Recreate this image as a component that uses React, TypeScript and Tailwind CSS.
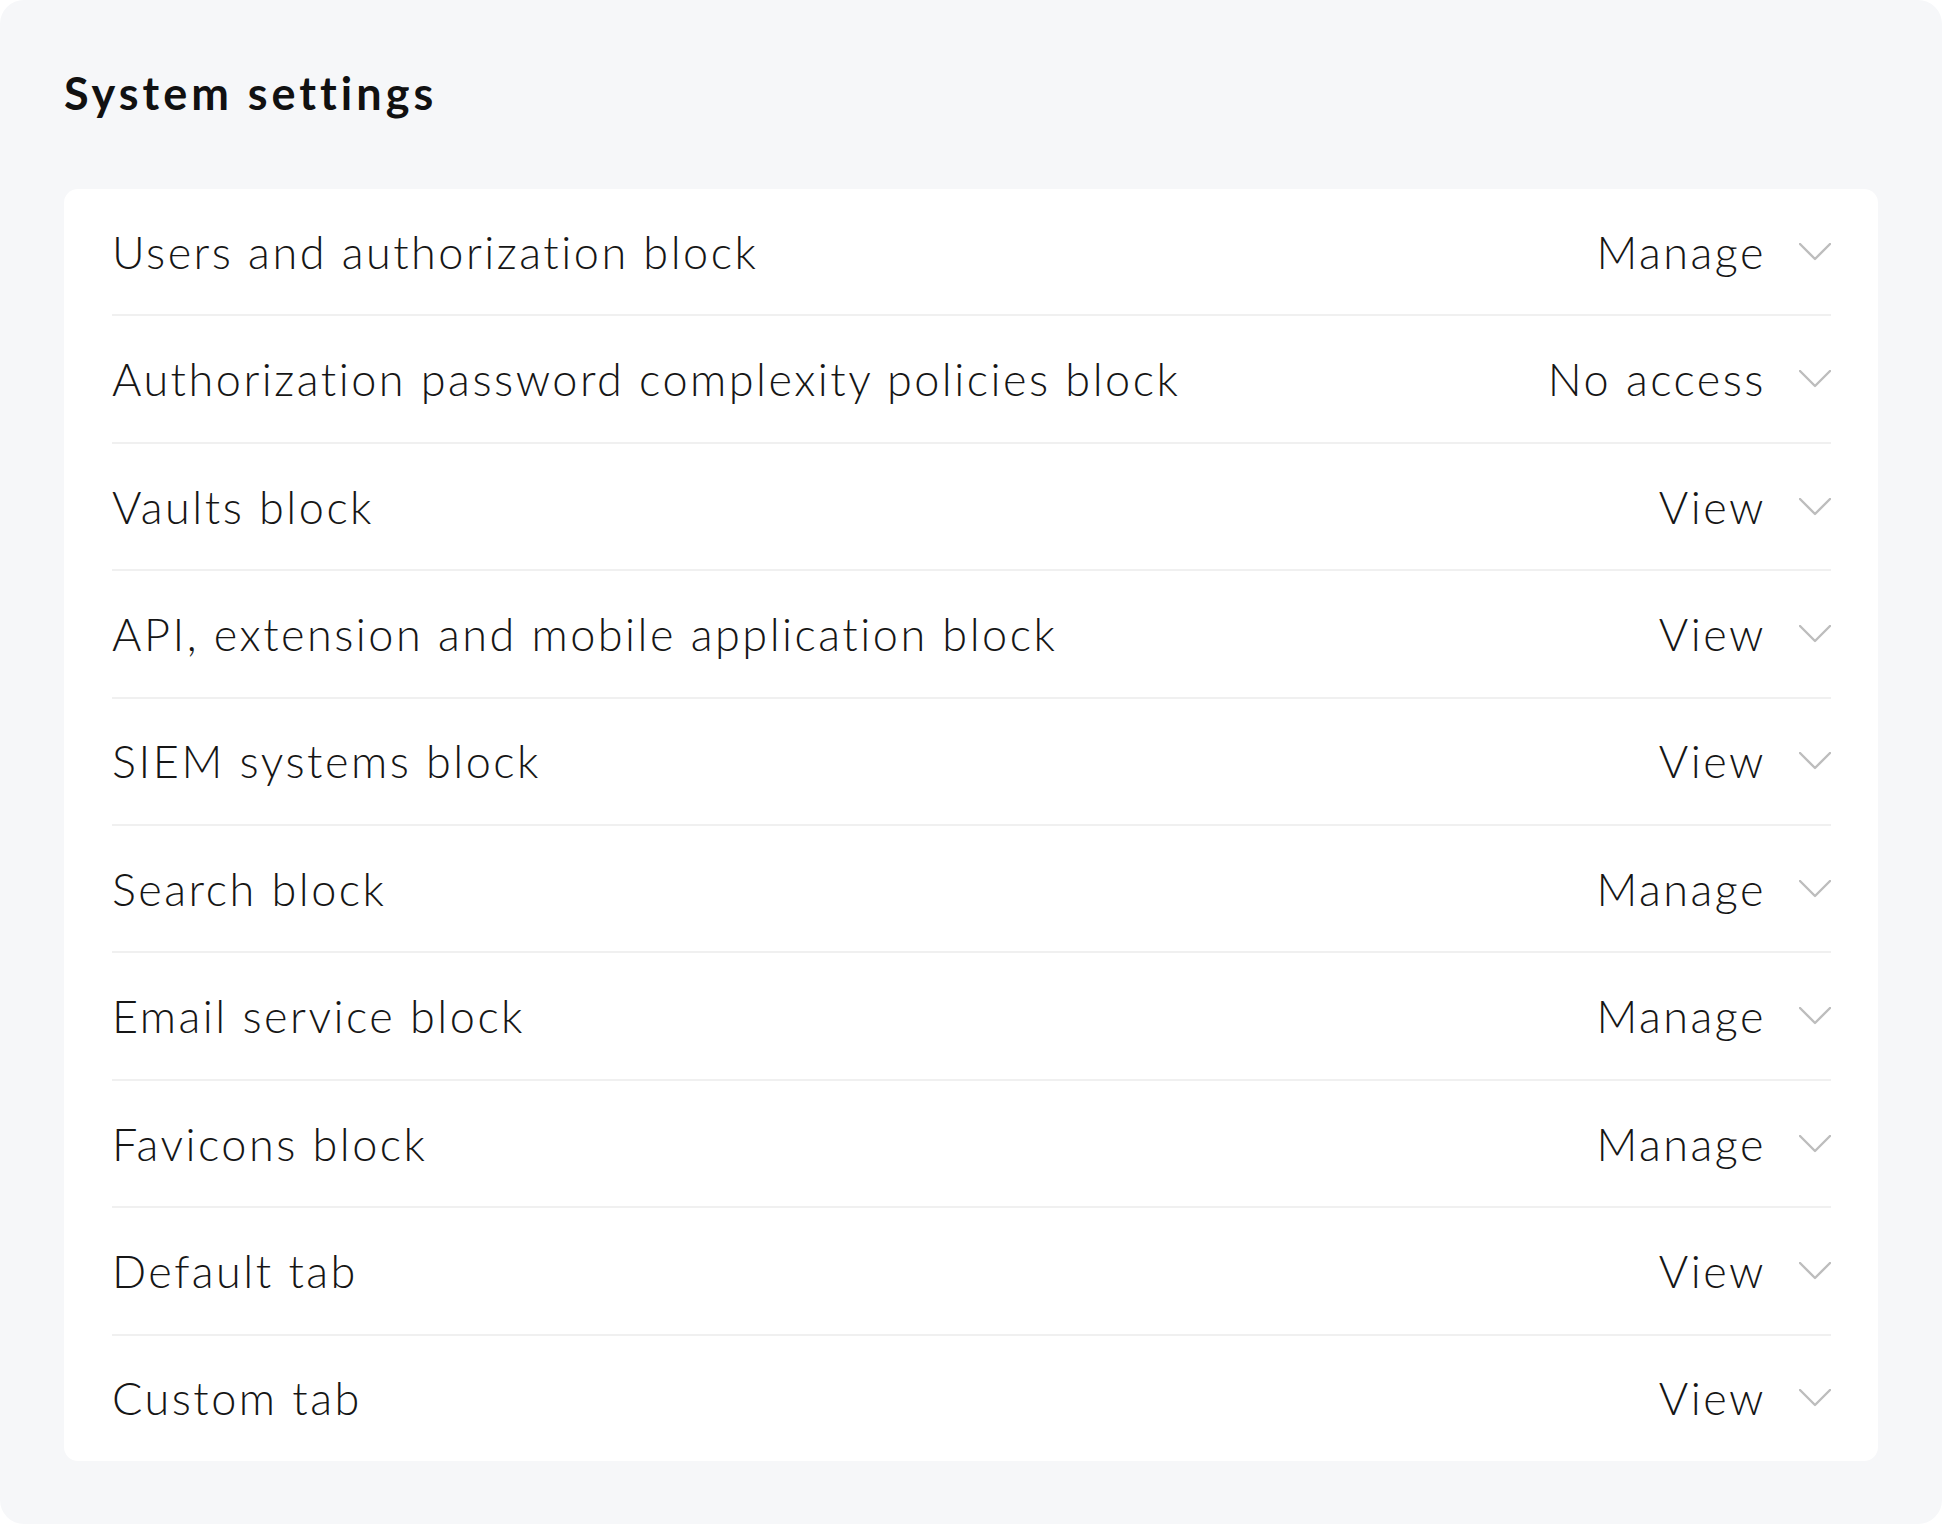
import React from 'react'

type Access = 'Manage' | 'View' | 'No access'

interface Permission {
  id: string
  title: string
  access: Access
}

const PERMISSIONS: Permission[] = [
  { id: 'users', title: 'Users and authorization block', access: 'Manage' },
  { id: 'password', title: 'Authorization password complexity policies block', access: 'No access' },
  { id: 'vaults', title: 'Vaults block', access: 'View' },
  { id: 'api', title: 'API, extension and mobile application block', access: 'View' },
  { id: 'siem', title: 'SIEM systems block', access: 'View' },
  { id: 'search', title: 'Search block', access: 'Manage' },
  { id: 'email', title: 'Email service block', access: 'Manage' },
  { id: 'favicons', title: 'Favicons block', access: 'Manage' },
  { id: 'default-tab', title: 'Default tab', access: 'View' },
  { id: 'custom-tab', title: 'Custom tab', access: 'View' },
]

function Chevron() {
  return (
    <svg width="32" height="18" viewBox="0 0 32 18" fill="none" className="shrink-0">
      <polyline points="1,1 16,16 31,1" stroke="#bdbdbd" strokeWidth="2.4" strokeLinecap="round" strokeLinejoin="round" />
    </svg>
  )
}

function PermissionRow({ item }: { item: Permission }) {
  return (
    <div className="flex flex-1 items-center justify-between border-t-2 border-[#f0f0f0] first:border-t-0">
      <span className="whitespace-nowrap">{item.title}</span>
      <button className="flex items-center gap-[33px] text-[#161616]">
        <span className="whitespace-nowrap">{item.access}</span>
        <Chevron />
      </button>
    </div>
  )
}

export default function App() {
  return (
    <div className="min-h-screen bg-white" style={{ fontFamily: 'Lato, "Open Sans", sans-serif' }}>
      <div className="w-[1942px] h-[1524px] rounded-[24px] bg-[#f6f7f9] px-[64px] pt-[71px]">
        <h1 className="text-[45px] leading-none font-bold text-[#111] tracking-[4px] mb-[73px]">System settings</h1>
        <div className="h-[1272px] w-[1814px] rounded-[14px] bg-white pl-[48px] pr-[47px]">
          <div className="flex h-full flex-col text-[45px] leading-[1.2] font-light tracking-[2.5px] text-[#161616]">
            {PERMISSIONS.map(p => <PermissionRow key={p.id} item={p} />)}
          </div>
        </div>
      </div>
    </div>
  )
}
